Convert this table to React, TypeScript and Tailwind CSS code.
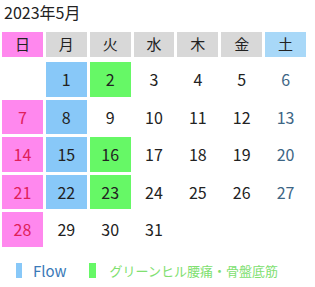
const days = ['日', '月', '火', '水', '木', '金', '土'];

type Cell = { d?: number; bg?: string };

const FLOW = 'bg-[#88c8f8]';
const GREEN = 'bg-[#66f866]';
const SUN = 'bg-[#ff88ee]';

const weeks: Cell[][] = [
  [{}, { d: 1, bg: FLOW }, { d: 2, bg: GREEN }, { d: 3 }, { d: 4 }, { d: 5 }, { d: 6 }],
  [{ d: 7, bg: SUN }, { d: 8, bg: FLOW }, { d: 9 }, { d: 10 }, { d: 11 }, { d: 12 }, { d: 13 }],
  [{ d: 14, bg: SUN }, { d: 15, bg: FLOW }, { d: 16, bg: GREEN }, { d: 17 }, { d: 18 }, { d: 19 }, { d: 20 }],
  [{ d: 21, bg: SUN }, { d: 22, bg: FLOW }, { d: 23, bg: GREEN }, { d: 24 }, { d: 25 }, { d: 26 }, { d: 27 }],
  [{ d: 28, bg: SUN }, { d: 29 }, { d: 30 }, { d: 31 }, {}, {}, {}],
];

export default function App() {
  return (
    <div
      className="w-[315px] h-[287px] bg-white text-[#222]"
      style={{ fontFamily: '"Noto Sans CJK JP", "Noto Sans", sans-serif' }}
    >
      <div className="pl-[4px] pt-[2px] text-[16px] leading-[20px]">2023年5月</div>

      <div className="ml-[2px] mt-[10px] w-[304px] grid grid-cols-7 gap-x-[3px]">
        {days.map((d, i) => (
          <div
            key={d}
            className={`h-[25px] flex items-center justify-center text-[15px] ${
              i === 0 ? 'bg-[#ff88ee]' : i === 6 ? 'bg-[#a8d8f8]' : 'bg-[#d8d8d8]'
            }`}
          >
            {d}
          </div>
        ))}
      </div>

      <div className="ml-[2px] mt-[5px] w-[304px] grid grid-cols-7 gap-x-[3px] gap-y-[3px]">
        {weeks.flat().map((c, i) => {
          const col = i % 7;
          const color = col === 0 ? 'text-[#e0205a]' : col === 6 ? 'text-[#3d6584]' : 'text-[#222]';
          return (
            <div
              key={i}
              className={`h-[34.5px] flex items-center justify-center text-[16px] ${c.bg ?? ''} ${color}`}
            >
              {c.d}
            </div>
          );
        })}
      </div>

      <div className="mt-[16px] flex items-center leading-[16px]">
        <span className="ml-[16px] w-[6px] h-[15px] bg-[#88c8f8]" />
        <span className="ml-[11px] text-[15px] text-[#3a7ab8]">Flow</span>
        <span className="ml-[22px] w-[7px] h-[15px] bg-[#66f866]" />
        <span className="ml-[14px] text-[13px] text-[#80e070]">グリーンヒル腰痛・骨盤底筋</span>
      </div>
    </div>
  );
}
